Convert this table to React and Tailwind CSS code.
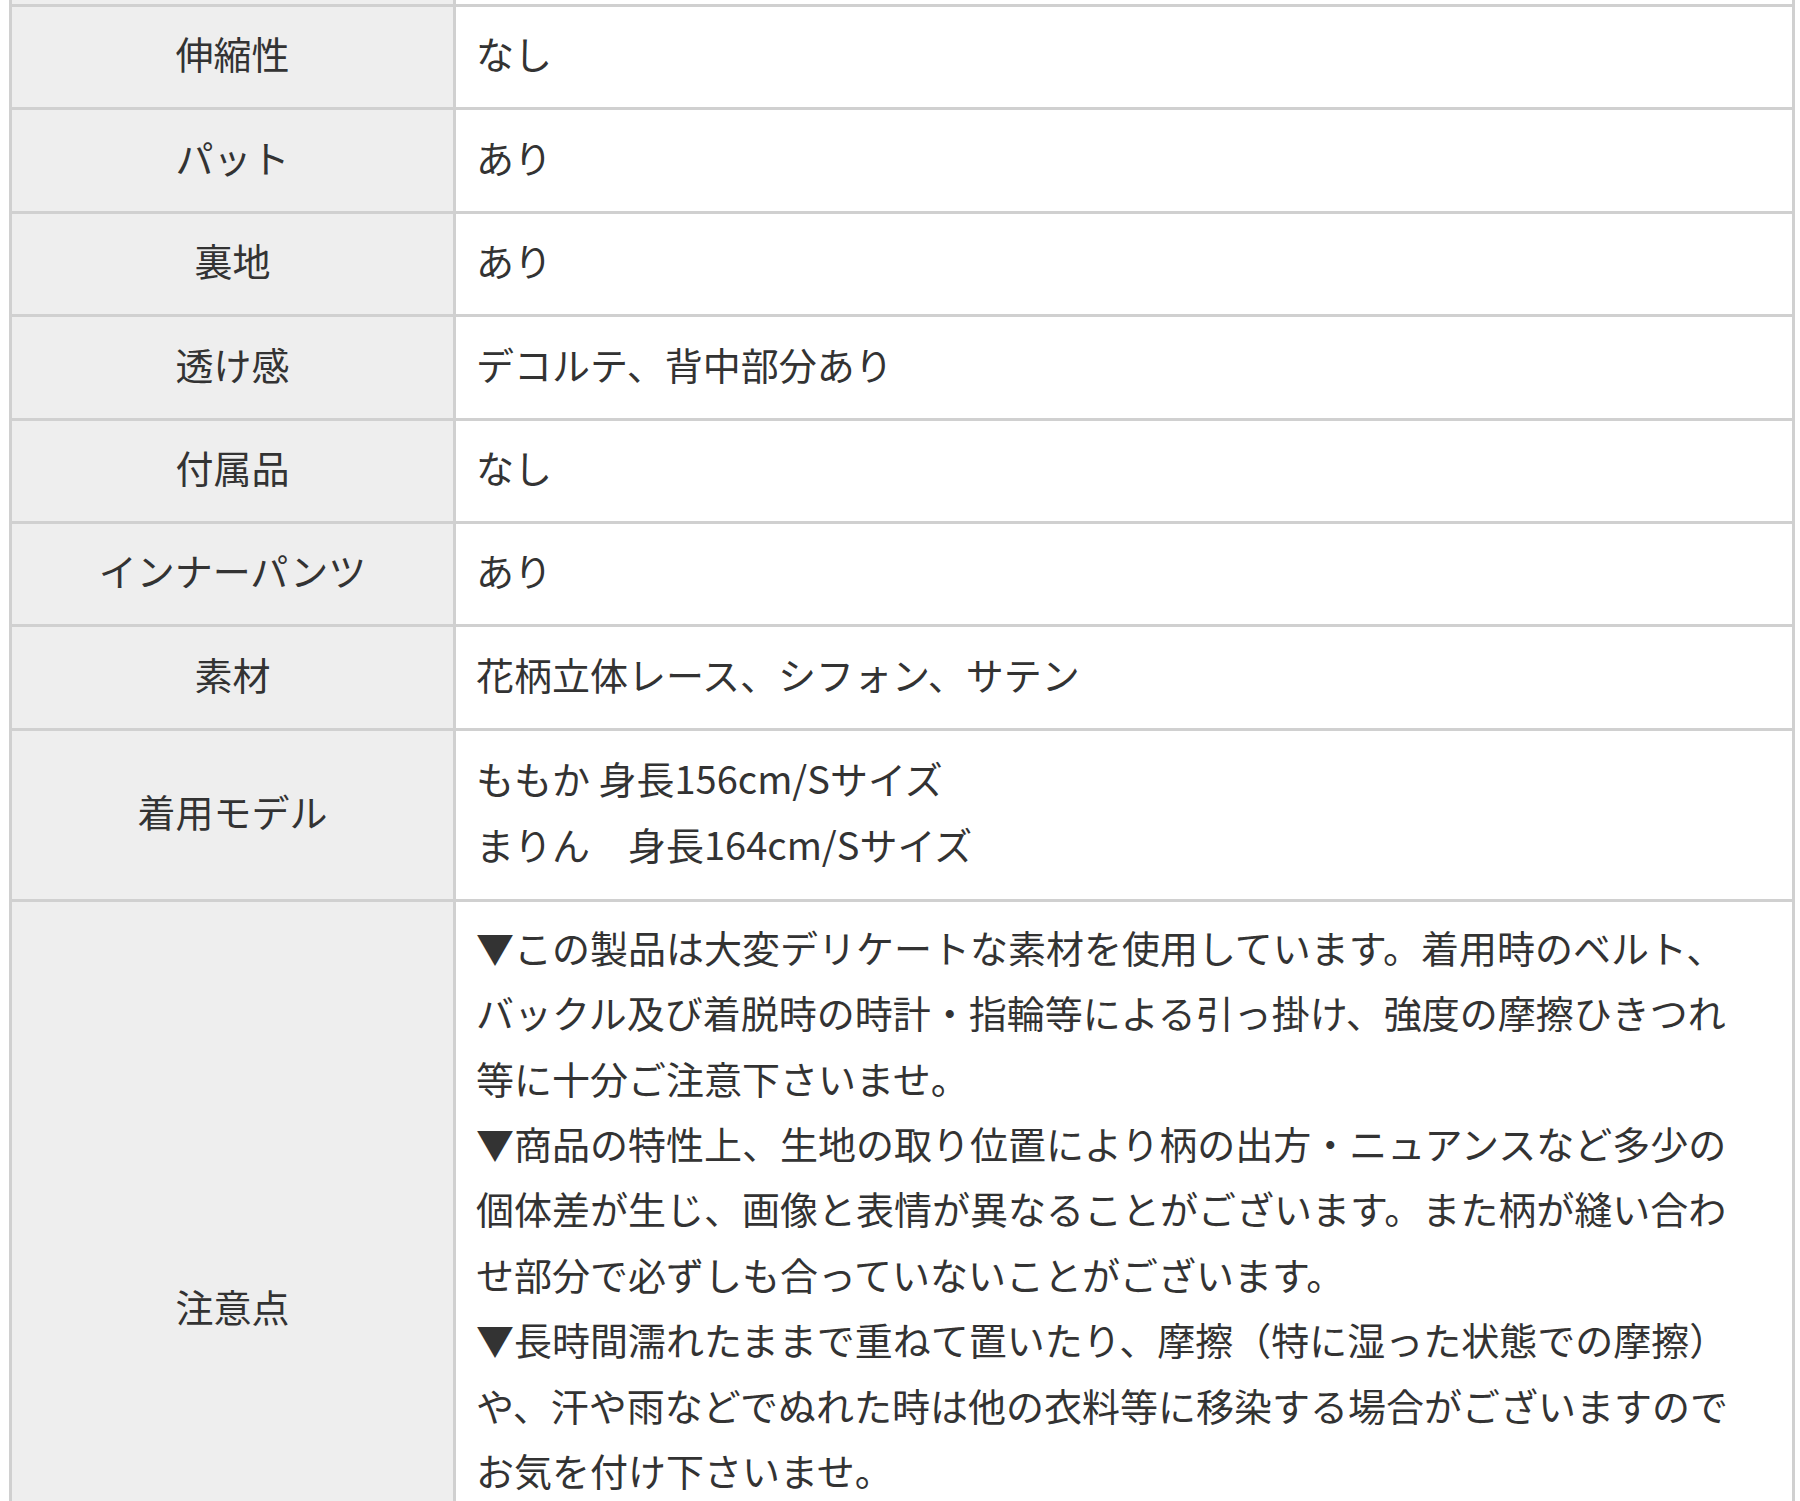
import React from 'react';

const rows = [
    { label: '伸縮性', value: ['なし'] },
    { label: 'パット', value: ['あり'] },
    { label: '裏地', value: ['あり'] },
    { label: '透け感', value: ['デコルテ、背中部分あり'] },
    { label: '付属品', value: ['なし'] },
    { label: 'インナーパンツ', value: ['あり'] },
    { label: '素材', value: ['花柄立体レース、シフォン、サテン'] },
];

const models = ['ももか 身長156cm/Sサイズ', 'まりん　身長164cm/Sサイズ'];

// line breaks kept as in the page so wrapping matches
const notes = [
    '▼この製品は大変デリケートな素材を使用しています。着用時のベルト、',
    'バックル及び着脱時の時計・指輪等による引っ掛け、強度の摩擦ひきつれ',
    '等に十分ご注意下さいませ。',
    '▼商品の特性上、生地の取り位置により柄の出方・ニュアンスなど多少の',
    '個体差が生じ、画像と表情が異なることがございます。また柄が縫い合わ',
    'せ部分で必ずしも合っていないことがございます。',
    '▼長時間濡れたままで重ねて置いたり、摩擦（特に湿った状態での摩擦）',
    'や、汗や雨などでぬれた時は他の衣料等に移染する場合がございますので',
    'お気を付け下さいませ。',
];

const Row = ({ label, height, align = 'center', children }) => (
    <div className={`flex border-t-[3px] border-[#d0d0d0] ${height}`}>
        <div
            className={`w-[441px] shrink-0 bg-[#eeeeee] flex items-center justify-center ${
                align === 'center' ? 'pb-[8px]' : 'pb-[2px]'
            }`}
        >
            {label}
        </div>
        <div
            className={`flex-1 border-l-[3px] border-[#d0d0d0] bg-white pl-[20px] pr-[20px] flex flex-col ${
                align === 'center' ? 'justify-center pb-[8px]' : 'justify-start pt-[12px]'
            }`}
        >
            {children}
        </div>
    </div>
);

export default function App() {
    return (
        <div
            className="min-h-screen bg-white text-[#333333] text-[38px] leading-[65.4px]"
            style={{ fontFamily: '"Noto Sans CJK JP", "Noto Sans", sans-serif' }}
        >
            <div className="ml-[9px] w-[1786px] border-l-[3px] border-r-[3px] border-[#d0d0d0]">
                {/* tail of the row above, scrolled out */}
                <div className="flex h-[4px]">
                    <div className="w-[441px] bg-[#eeeeee]" />
                    <div className="flex-1 border-l-[3px] border-[#d0d0d0] bg-white" />
                </div>

                {rows.map((r) => (
                    <Row key={r.label} label={r.label} height="h-[103.4px]">
                        {r.value.map((v) => (
                            <div key={v} className="whitespace-nowrap">{v}</div>
                        ))}
                    </Row>
                ))}

                <Row label="着用モデル" height="h-[171px]">
                    {models.map((m) => (
                        <div key={m} className="whitespace-pre">{m}</div>
                    ))}
                </Row>

                <Row label="注意点" height="h-[813px]" align="top">
                    {notes.map((n) => (
                        <div key={n} className="whitespace-nowrap">{n}</div>
                    ))}
                </Row>
            </div>
        </div>
    );
}
